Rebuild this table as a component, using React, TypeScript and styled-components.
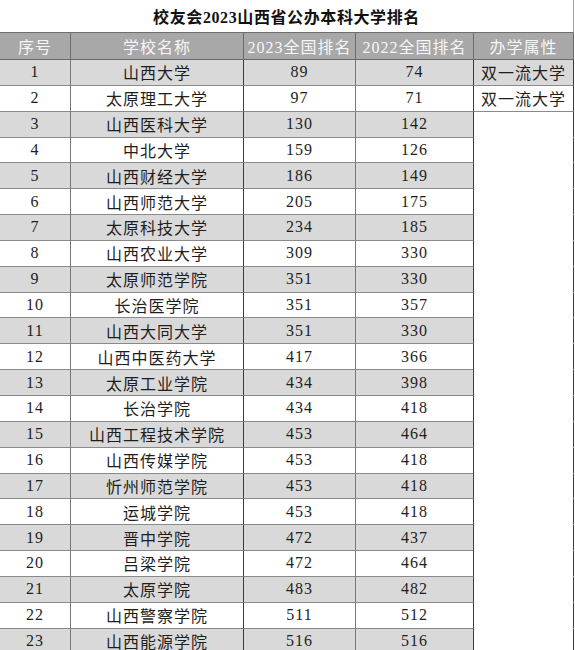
import { createGlobalStyle } from "styled-components";
import styled from "styled-components";

const GlobalStyle = createGlobalStyle`
    html, body {
        margin: 0;
        padding: 0;
        background: #ffffff;
    }
    body {
        font-family: "Liberation Serif", "Noto Sans CJK SC", serif;
        color: #222222;
    }
`;

type School = {
    name: string;
    rank2023: number;
    rank2022: number;
    kind?: string;
};

const schools: School[] = [
    { name: "山西大学", rank2023: 89, rank2022: 74, kind: "双一流大学" },
    { name: "太原理工大学", rank2023: 97, rank2022: 71, kind: "双一流大学" },
    { name: "山西医科大学", rank2023: 130, rank2022: 142 },
    { name: "中北大学", rank2023: 159, rank2022: 126 },
    { name: "山西财经大学", rank2023: 186, rank2022: 149 },
    { name: "山西师范大学", rank2023: 205, rank2022: 175 },
    { name: "太原科技大学", rank2023: 234, rank2022: 185 },
    { name: "山西农业大学", rank2023: 309, rank2022: 330 },
    { name: "太原师范学院", rank2023: 351, rank2022: 330 },
    { name: "长治医学院", rank2023: 351, rank2022: 357 },
    { name: "山西大同大学", rank2023: 351, rank2022: 330 },
    { name: "山西中医药大学", rank2023: 417, rank2022: 366 },
    { name: "太原工业学院", rank2023: 434, rank2022: 398 },
    { name: "长治学院", rank2023: 434, rank2022: 418 },
    { name: "山西工程技术学院", rank2023: 453, rank2022: 464 },
    { name: "山西传媒学院", rank2023: 453, rank2022: 418 },
    { name: "忻州师范学院", rank2023: 453, rank2022: 418 },
    { name: "运城学院", rank2023: 453, rank2022: 418 },
    { name: "晋中学院", rank2023: 472, rank2022: 437 },
    { name: "吕梁学院", rank2023: 472, rank2022: 464 },
    { name: "太原学院", rank2023: 483, rank2022: 482 },
    { name: "山西警察学院", rank2023: 511, rank2022: 512 },
    { name: "山西能源学院", rank2023: 516, rank2022: 516 },
];

const Sheet = styled.div`
    width: 574px;
    box-sizing: border-box;
`;

const Title = styled.div`
    height: 33px;
    box-sizing: border-box;
    display: flex;
    align-items: center;
    justify-content: center;
    border-right: 1px solid #9aa4b4;
    border-bottom: 1px solid #6e6e6e;
    font-size: 16px;
    font-weight: 700;
    color: #111111;
    letter-spacing: 0.6px;
`;

const Grid = styled.div`
    display: grid;
    grid-template-columns: 71px 173px 112px 118px 100px;
    grid-template-rows: 27px;
    grid-auto-rows: 25.85px;
`;

const HeaderCell = styled.div`
    box-sizing: border-box;
    display: flex;
    align-items: center;
    justify-content: center;
    background: #a8a8a8;
    color: #f6f6f6;
    font-size: 16px;
    letter-spacing: 1px;
    white-space: nowrap;
    border-right: 1px solid #6a6a6a;
    border-bottom: 1px solid #6a6a6a;
`;

const Cell = styled.div<{ $shaded: boolean; $plain?: boolean; $dark?: boolean }>`
    box-sizing: border-box;
    display: flex;
    align-items: center;
    justify-content: center;
    background: ${(p) => (p.$shaded ? "#d9d9d9" : "#ffffff")};
    border-right: 1px solid ${(p) => (p.$dark ? "#3c3c3c" : "#777777")};
    border-bottom: 1px solid ${(p) => (p.$plain ? "transparent" : "#8a8a8a")};
    font-size: 16px;
    letter-spacing: 1px;
    color: #1e1e1e;
    white-space: nowrap;
`;

const headers = ["序号", "学校名称", "2023全国排名", "2022全国排名", "办学属性"];

export default function App() {
    return (
        <Sheet>
            <GlobalStyle />
            <Title>校友会2023山西省公办本科大学排名</Title>
            <Grid>
                {headers.map((h) => (
                    <HeaderCell key={h}>{h}</HeaderCell>
                ))}
                {schools.map((s, i) => {
                    const shaded = i % 2 === 0;
                    const hasKind = !!s.kind;
                    return [
                        <Cell key={`n${i}`} $shaded={shaded}>
                            {i + 1}
                        </Cell>,
                        <Cell key={`s${i}`} $shaded={shaded} $dark>
                            {s.name}
                        </Cell>,
                        <Cell key={`a${i}`} $shaded={shaded}>
                            {s.rank2023}
                        </Cell>,
                        <Cell key={`b${i}`} $shaded={shaded} $dark>
                            {s.rank2022}
                        </Cell>,
                        <Cell
                            key={`k${i}`}
                            $shaded={shaded && hasKind}
                            $plain={i > 1}
                            $dark
                        >
                            {s.kind}
                        </Cell>,
                    ];
                })}
            </Grid>
        </Sheet>
    );
}
